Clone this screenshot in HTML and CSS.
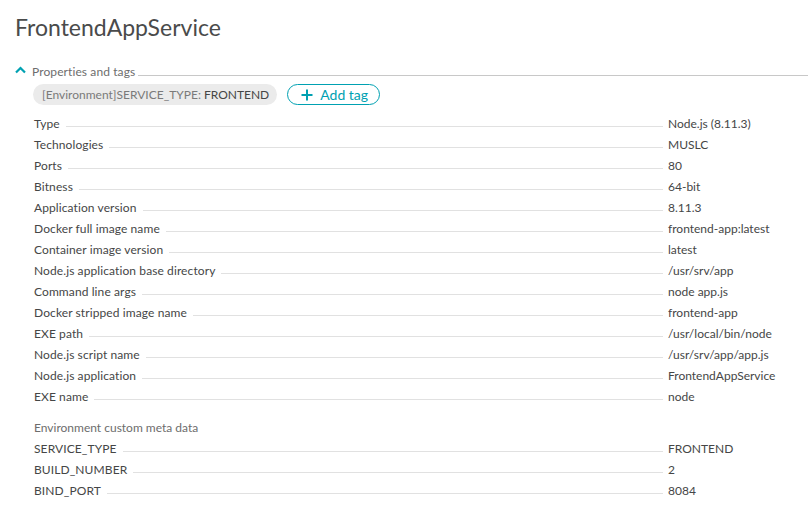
FILE: index.html
```html
<!DOCTYPE html>
<html>
<head>
<meta charset="utf-8">
<link rel="stylesheet" href="styles.css">
</head>
<body>
<div class="page">
  <h1 class="title">FrontendAppService</h1>
  <div class="section-head">
    <svg class="chev" width="11" height="8" viewBox="0 0 11 8"><path d="M1 6.5 L5.5 2 L10 6.5" fill="none" stroke="#00a1b2" stroke-width="2.2"/></svg>
    <span class="section-label">Properties and tags</span>
    <span class="section-line"></span>
  </div>
  <div class="tags">
    <span class="tag"><span class="tag-key">[Environment]SERVICE_TYPE: </span><span class="tag-val">FRONTEND</span></span>
    <button class="add-tag"><svg width="12" height="12" viewBox="0 0 12 12"><path d="M6 0.5 V11.5 M0.5 6 H11.5" stroke="#00a1b2" stroke-width="2"/></svg><span>Add tag</span></button>
  </div>
  <div class="props">
    <div class="row"><span class="k">Type</span><span class="lead"></span><span class="v">Node.js (8.11.3)</span></div>
    <div class="row"><span class="k">Technologies</span><span class="lead"></span><span class="v">MUSLC</span></div>
    <div class="row"><span class="k">Ports</span><span class="lead"></span><span class="v">80</span></div>
    <div class="row"><span class="k">Bitness</span><span class="lead"></span><span class="v">64-bit</span></div>
    <div class="row"><span class="k">Application version</span><span class="lead"></span><span class="v">8.11.3</span></div>
    <div class="row"><span class="k">Docker full image name</span><span class="lead"></span><span class="v">frontend-app:latest</span></div>
    <div class="row"><span class="k">Container image version</span><span class="lead"></span><span class="v">latest</span></div>
    <div class="row"><span class="k">Node.js application base directory</span><span class="lead"></span><span class="v">/usr/srv/app</span></div>
    <div class="row"><span class="k">Command line args</span><span class="lead"></span><span class="v">node app.js</span></div>
    <div class="row"><span class="k">Docker stripped image name</span><span class="lead"></span><span class="v">frontend-app</span></div>
    <div class="row"><span class="k">EXE path</span><span class="lead"></span><span class="v">/usr/local/bin/node</span></div>
    <div class="row"><span class="k">Node.js script name</span><span class="lead"></span><span class="v">/usr/srv/app/app.js</span></div>
    <div class="row"><span class="k">Node.js application</span><span class="lead"></span><span class="v">FrontendAppService</span></div>
    <div class="row"><span class="k">EXE name</span><span class="lead"></span><span class="v">node</span></div>
  </div>
  <div class="props meta">
    <div class="meta-head">Environment custom meta data</div>
    <div class="row"><span class="k">SERVICE_TYPE</span><span class="lead"></span><span class="v">FRONTEND</span></div>
    <div class="row"><span class="k">BUILD_NUMBER</span><span class="lead"></span><span class="v">2</span></div>
    <div class="row"><span class="k">BIND_PORT</span><span class="lead"></span><span class="v">8084</span></div>
  </div>
</div>
</body>
</html>
```
FILE: styles.css
```css
* { box-sizing: border-box; }
body {
  margin: 0;
  background: #fff;
  font-family: Lato, "Open Sans", sans-serif;
  color: #454646;
}
.page {
  padding: 12px 0 0 15px;
}
.title {
  margin: 0;
  font-size: 23px;
  font-weight: 400;
  line-height: 30px;
  color: #4a4b4b;
}
.section-head {
  display: flex;
  align-items: center;
  height: 18px;
  margin-top: 20px;
}
.chev { margin-right: 6px; margin-top: -2px; }
.section-label {
  font-size: 12px;
  color: #6d6d6d;
  letter-spacing: 0.1px;
}
.section-line {
  flex: 1;
  height: 1px;
  background: #c8c8c8;
  margin-left: 3px;
  margin-top: 8px;
}
.tags {
  display: flex;
  gap: 10px;
  margin-top: 4px;
  margin-left: 18px;
}
.tag {
  display: inline-flex;
  align-items: center;
  height: 21px;
  padding: 0 8px 0 9px;
  border-radius: 11px;
  background: #ebebeb;
  font-size: 12px;
}
.tag-key { color: #7a7a7a; white-space: pre; }
.tag-val { color: #454646; }
.add-tag {
  display: inline-flex;
  align-items: center;
  gap: 7px;
  height: 21px;
  padding: 0 11px 0 13px;
  border: 1px solid #00a1b2;
  border-radius: 11px;
  background: #fff;
  font-family: inherit;
  font-size: 14px;
  color: #00a1b2;
}
.props {
  margin-top: 8px;
  margin-left: 19px;
}
.row {
  display: flex;
  align-items: center;
  height: 21px;
  font-size: 12px;
}
.k { white-space: nowrap; color: #454646; letter-spacing: 0.1px; }
.lead {
  flex: 1;
  height: 1px;
  background: #e1e1e1;
  margin: 6px 5px 0 6px;
}
.v {
  width: 140px;
  white-space: nowrap;
  color: #454646;
}
.meta { margin-top: 10px; }
.meta-head {
  height: 21px;
  line-height: 21px;
  font-size: 12px;
  color: #6d6d6d;
}
```
